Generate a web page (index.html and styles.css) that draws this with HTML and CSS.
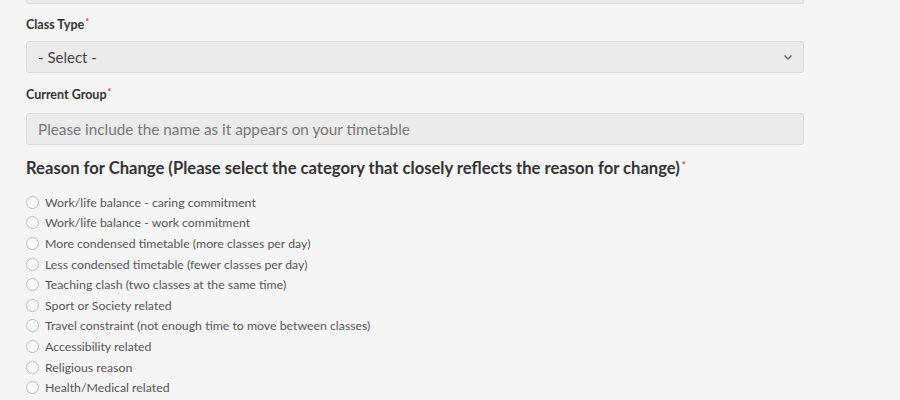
FILE: index.html
```html
<!DOCTYPE html>
<html lang="en">
<head>
<meta charset="utf-8">
<title>Class change form</title>
<link rel="stylesheet" href="styles.css">
</head>
<body>
<form class="form">
  <div class="stub"></div>
  <div class="field">
    <label class="label">Class Type<span class="req">*</span></label>
    <div class="select">
      <span class="select-text">- Select -</span>
      <svg class="chev" width="10" height="7" viewBox="0 0 10 7"><path d="M1.5 1.5 L5 5 L8.5 1.5" fill="none" stroke="#666" stroke-width="1.5"/></svg>
    </div>
  </div>
  <div class="field">
    <label class="label label-wide">Current Group<span class="req">*</span></label>
    <div class="input"><span class="placeholder">Please include the name as it appears on your timetable</span></div>
  </div>
  <h3 class="heading">Reason for Change (Please select the category that closely reflects the reason for change)<span class="req req-lg">*</span></h3>
  <ul class="radios">
    <li class="radio"><span class="circle"></span>Work/life balance - caring commitment</li>
    <li class="radio"><span class="circle"></span>Work/life balance - work commitment</li>
    <li class="radio"><span class="circle"></span>More condensed timetable (more classes per day)</li>
    <li class="radio"><span class="circle"></span>Less condensed timetable (fewer classes per day)</li>
    <li class="radio"><span class="circle"></span>Teaching clash (two classes at the same time)</li>
    <li class="radio"><span class="circle"></span>Sport or Society related</li>
    <li class="radio"><span class="circle"></span>Travel constraint (not enough time to move between classes)</li>
    <li class="radio"><span class="circle"></span>Accessibility related</li>
    <li class="radio"><span class="circle"></span>Religious reason</li>
    <li class="radio"><span class="circle"></span>Health/Medical related</li>
  </ul>
</form>
</body>
</html>
```

FILE: styles.css
```css
html, body {
  margin: 0;
  padding: 0;
  background: #f5f5f5;
  font-family: Lato, "Open Sans", sans-serif;
  color: #333;
}
.form {
  margin: 0;
  padding: 0 0 0 26px;
  width: 778px;
}
.stub {
  height: 3px;
  border: 1px solid #ddd;
  border-top: none;
  border-radius: 0 0 3px 3px;
  background: #ebebeb;
}
.field {
  display: flex;
  flex-direction: column;
}
.label {
  font-size: 12.5px;
  font-weight: 700;
  color: #333;
  line-height: 16px;
  margin-top: 13px;
  margin-bottom: 8px;
}
.label-wide {
  margin-top: 14px;
  margin-bottom: 10px;
}
.req {
  color: #d0343a;
  font-size: 9px;
  vertical-align: top;
  margin-left: 1px;
  position: relative;
  top: -3px;
}
.req-lg {
  font-size: 10px;
  margin-left: 2px;
  top: -4px;
}
.select, .input {
  box-sizing: border-box;
  height: 32px;
  border: 1px solid #dcdcdc;
  border-radius: 3px;
  background: #ebebeb;
  display: flex;
  align-items: center;
  padding: 0 11px;
  font-size: 15px;
}
.select {
  justify-content: space-between;
  padding-right: 10px;
  color: #444;
}
.input {
  font-size: 15.3px;
}
.placeholder {
  color: #777;
}
.heading {
  margin: 12px 0 0;
  font-size: 16.6px;
  line-height: 22px;
  font-weight: 700;
  color: #333;
}
.radios {
  list-style: none;
  margin: 13px 0 0;
  padding: 0;
}
.radio {
  display: flex;
  align-items: center;
  height: 20.6px;
  font-size: 12.3px;
  color: #555;
}
.circle {
  box-sizing: border-box;
  width: 13px;
  height: 13px;
  border: 1px solid #bbb;
  border-radius: 50%;
  background: #fafafa;
  margin-right: 6px;
}
```
